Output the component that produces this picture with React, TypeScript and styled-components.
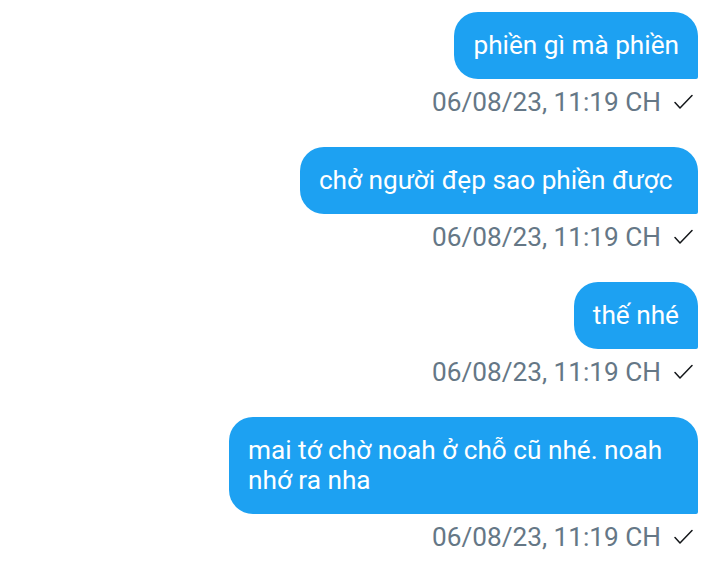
import React from "react";
import styled, { createGlobalStyle } from "styled-components";

const Global = createGlobalStyle`
  html, body { margin: 0; padding: 0; background: #ffffff; }
  body { font-family: Roboto, "Noto Sans", "Liberation Sans", sans-serif; }
`;

const Thread = styled.div`
  display: flex;
  flex-direction: column;
  align-items: flex-end;
  padding: 12px 21px 0 0;
  gap: 31px;
`;

const Group = styled.div`
  display: flex;
  flex-direction: column;
  align-items: flex-end;
`;

const Bubble = styled.div`
  box-sizing: border-box;
  background: #1da1f2;
  color: #ffffff;
  font-size: 26.2px;
  line-height: 30px;
  padding: 18px 19px 19px 19px;
  border-radius: 24px 24px 2px 24px;
  max-width: 469px;
  white-space: pre-wrap;
`;

const Meta = styled.div`
  display: flex;
  align-items: center;
  gap: 13px;
  margin-top: 9px;
  padding-right: 5px;
  color: #657786;
  font-size: 26.2px;
  line-height: 28px;
`;

const Check = () => (
  <svg width="19" height="16" viewBox="0 0 19 16" fill="none">
    <path d="M1 8.5 L6 14 L18 1.5" stroke="#14171a" strokeWidth="1.5" strokeLinecap="round" strokeLinejoin="round" />
  </svg>
);

const messages = [
  "phiền gì mà phiền",
  "chở người đẹp sao phiền được ",
  "thế nhé",
  "mai tớ chờ noah ở chỗ cũ nhé. noah nhớ ra nha",
];

export default function App() {
  return (
    <>
      <Global />
      <Thread>
        {messages.map((m, i) => (
          <Group key={i}>
            <Bubble>{m}</Bubble>
            <Meta>
              <span>06/08/23, 11:19 CH</span>
              <Check />
            </Meta>
          </Group>
        ))}
      </Thread>
    </>
  );
}
